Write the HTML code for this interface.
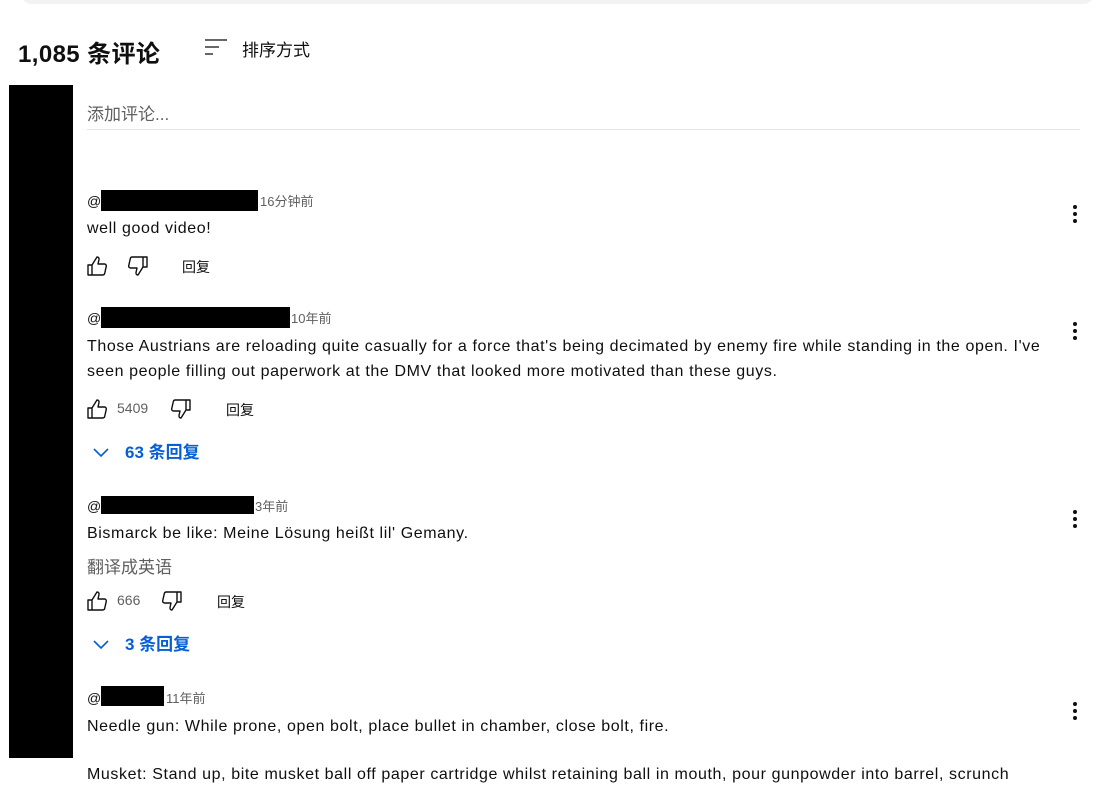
<!DOCTYPE html>
<html><head><meta charset="utf-8"><style>
body{margin:0;width:1098px;height:781px;overflow:hidden;background:#fff;font-family:"Liberation Sans","Noto Sans CJK SC",sans-serif;color:#0f0f0f;position:relative}
.a{position:absolute;white-space:nowrap}
.blk{position:absolute;background:#000}
.meta{font-size:13px;color:#606060}
.txt{font-size:16px;line-height:25px;letter-spacing:0.6px}
.cnt{font-size:14px;color:#606060}
.rep{font-size:14px}
.more{font-size:17px;color:#065fd4;font-weight:bold}
svg.i{position:absolute}
.dots{position:absolute;width:4px}
.dots i{display:block;width:4px;height:4px;border-radius:2px;background:#0f0f0f;margin-bottom:3px}
</style></head><body>
<div style="position:absolute;left:20px;top:-10px;width:1075px;height:14px;background:#f2f2f2;border-radius:0 0 12px 12px"></div>
<div class="a" style="left:18px;top:34px;font-size:24px;font-weight:bold;letter-spacing:0.4px">1,085 条评论</div>
<svg class="i" style="left:204px;top:38px" width="24" height="20" viewBox="0 0 24 20"><path d="M1 2h22M1 9h14M1 16h8" stroke="#0f0f0f" stroke-width="1.3" fill="none"/></svg>
<div class="a" style="left:242px;top:36px;font-size:17px">排序方式</div>
<div class="blk" style="left:9px;top:85px;width:64px;height:673px"></div>
<div class="a" style="left:87px;top:100px;font-size:17px;color:#606060">添加评论...</div>
<div style="position:absolute;left:87px;top:129px;width:993px;height:1px;background:#e5e5e5"></div>

<div class="a" style="left:87px;top:193px;font-size:14px">@</div>
<div class="blk" style="left:101px;top:190px;width:157px;height:21px"></div>
<div class="a meta" style="left:260px;top:191px">16分钟前</div>
<div class="a txt" style="left:87px;top:216px">well good video!</div>
<svg class="i" style="left:85px;top:254px" width="24" height="24" viewBox="0 0 24 24"><path d="M3 11h4v10H3zM7 11l5-8c1.5 0 2.2 1 2 2.5L13 10h6.5c1.2 0 2 1 1.8 2.2l-1.6 7.2c-.2.9-1 1.6-2 1.6H7" stroke="#0f0f0f" stroke-width="1.4" fill="none" stroke-linejoin="round"/></svg>
<svg class="i" style="left:126px;top:254px" width="24" height="24" viewBox="0 0 24 24" transform="rotate(180)"><path d="M3 11h4v10H3zM7 11l5-8c1.5 0 2.2 1 2 2.5L13 10h6.5c1.2 0 2 1 1.8 2.2l-1.6 7.2c-.2.9-1 1.6-2 1.6H7" stroke="#0f0f0f" stroke-width="1.4" fill="none" stroke-linejoin="round"/></svg>
<div class="a rep" style="left:182px;top:257px">回复</div>
<div class="dots" style="left:1073px;top:205px"><i></i><i></i><i></i></div>

<div class="a" style="left:87px;top:310px;font-size:14px">@</div>
<div class="blk" style="left:101px;top:307px;width:189px;height:21px"></div>
<div class="a meta" style="left:291px;top:308px">10年前</div>
<div class="a txt" style="left:87px;top:334px">Those Austrians are reloading quite casually for a force that's being decimated by enemy fire while standing in the open. I've<br>seen people filling out paperwork at the DMV that looked more motivated than these guys.</div>
<svg class="i" style="left:85px;top:397px" width="24" height="24" viewBox="0 0 24 24"><path d="M3 11h4v10H3zM7 11l5-8c1.5 0 2.2 1 2 2.5L13 10h6.5c1.2 0 2 1 1.8 2.2l-1.6 7.2c-.2.9-1 1.6-2 1.6H7" stroke="#0f0f0f" stroke-width="1.4" fill="none" stroke-linejoin="round"/></svg>
<div class="a cnt" style="left:117px;top:400px">5409</div>
<svg class="i" style="left:169px;top:397px" width="24" height="24" viewBox="0 0 24 24" transform="rotate(180)"><path d="M3 11h4v10H3zM7 11l5-8c1.5 0 2.2 1 2 2.5L13 10h6.5c1.2 0 2 1 1.8 2.2l-1.6 7.2c-.2.9-1 1.6-2 1.6H7" stroke="#0f0f0f" stroke-width="1.4" fill="none" stroke-linejoin="round"/></svg>
<div class="a rep" style="left:226px;top:400px">回复</div>
<svg class="i" style="left:92px;top:446px" width="18" height="14" viewBox="0 0 18 14"><path d="M2 3l7 7 7-7" stroke="#065fd4" stroke-width="1.6" fill="none"/></svg>
<div class="a more" style="left:125px;top:438px">63 条回复</div>
<div class="dots" style="left:1073px;top:322px"><i></i><i></i><i></i></div>

<div class="a" style="left:87px;top:498px;font-size:14px">@</div>
<div class="blk" style="left:101px;top:496px;width:153px;height:18px"></div>
<div class="a meta" style="left:255px;top:496px">3年前</div>
<div class="a txt" style="left:87px;top:521px">Bismarck be like: Meine Lösung heißt lil' Gemany.</div>
<div class="a" style="left:87px;top:553px;font-size:17px;color:#606060">翻译成英语</div>
<svg class="i" style="left:85px;top:589px" width="24" height="24" viewBox="0 0 24 24"><path d="M3 11h4v10H3zM7 11l5-8c1.5 0 2.2 1 2 2.5L13 10h6.5c1.2 0 2 1 1.8 2.2l-1.6 7.2c-.2.9-1 1.6-2 1.6H7" stroke="#0f0f0f" stroke-width="1.4" fill="none" stroke-linejoin="round"/></svg>
<div class="a cnt" style="left:117px;top:592px">666</div>
<svg class="i" style="left:160px;top:589px" width="24" height="24" viewBox="0 0 24 24" transform="rotate(180)"><path d="M3 11h4v10H3zM7 11l5-8c1.5 0 2.2 1 2 2.5L13 10h6.5c1.2 0 2 1 1.8 2.2l-1.6 7.2c-.2.9-1 1.6-2 1.6H7" stroke="#0f0f0f" stroke-width="1.4" fill="none" stroke-linejoin="round"/></svg>
<div class="a rep" style="left:217px;top:592px">回复</div>
<svg class="i" style="left:92px;top:638px" width="18" height="14" viewBox="0 0 18 14"><path d="M2 3l7 7 7-7" stroke="#065fd4" stroke-width="1.6" fill="none"/></svg>
<div class="a more" style="left:125px;top:630px">3 条回复</div>
<div class="dots" style="left:1073px;top:510px"><i></i><i></i><i></i></div>

<div class="a" style="left:87px;top:690px;font-size:14px">@</div>
<div class="blk" style="left:101px;top:686px;width:63px;height:20px"></div>
<div class="a meta" style="left:166px;top:688px">11年前</div>
<div class="a txt" style="left:87px;top:714px">Needle gun: While prone, open bolt, place bullet in chamber, close bolt, fire.</div>
<div class="a txt" style="left:87px;top:762px">Musket: Stand up, bite musket ball off paper cartridge whilst retaining ball in mouth, pour gunpowder into barrel, scrunch</div>
<div class="dots" style="left:1073px;top:702px"><i></i><i></i><i></i></div>
</body></html>
